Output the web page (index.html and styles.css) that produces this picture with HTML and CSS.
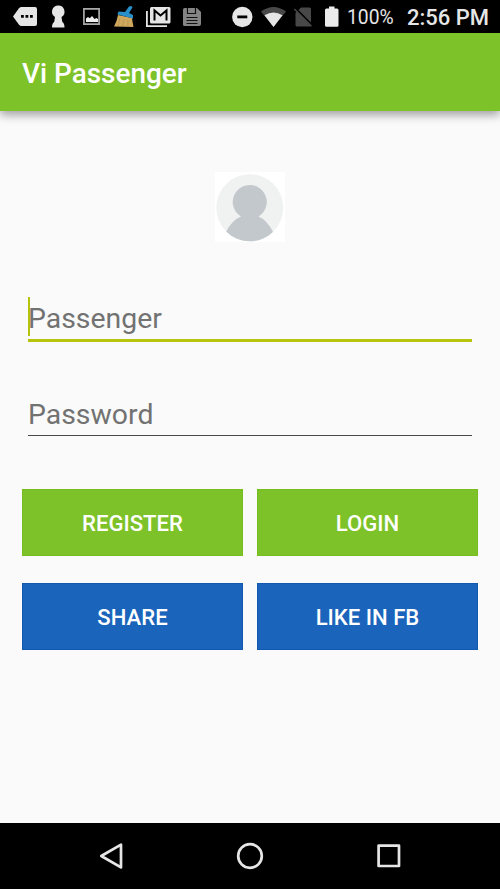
FILE: index.html
```html
<!DOCTYPE html>
<html lang="en">
<head>
<meta charset="utf-8">
<title>Vi Passenger</title>
<link rel="stylesheet" href="styles.css">
</head>
<body>
<div class="screen">
  <div class="status">
    <svg width="45" height="33" viewBox="0 0 45 33"><path fill="#e6e6e6" d="M13 16.500L19 8.200Q20 7 21.500 7H35Q37 7 37 9V24Q37 26 35 26H21.500Q20 26 19 24.800Z"/><path d="M21 15h2.800v2.800H21zM25.500 15h2.800v2.800h-2.800zM30 15h2.800v2.800H30z"/></svg>
    <svg width="30" height="33" viewBox="45 0 30 33"><path fill="#e6e6e6" d="M58.200 5.500A6.200 6.200 0 0 1 61.500 17L62.300 22Q64.500 23 64.500 27.500H52Q52 23 54.200 22L55 17A6.200 6.200 0 0 1 58.200 5.500Z"/></svg>
    <svg width="32" height="33" viewBox="75 0 32 33"><path fill="none" stroke="#aaa" stroke-width="1.700" d="M83.900 8.900h15.200v15.200H83.900z"/><path fill="#eee" d="M86 22v-3.500l2-1.500 1.800 1.200 2.200-2.200 2.500 3 2-1 1.500 1v3z"/></svg>
    <svg width="33" height="33" viewBox="107 0 33 33"><path fill="#cfa85e" d="M118 15L132 18Q132.500 22 133.500 27L114 26.500Q117 21 118 15Z"/><path stroke="#a98646" stroke-width=".5" d="M120 18l-2 8M124 19l-1.500 7M128 19.500l-.2 7"/><path fill="#2790c9" d="M118.500 11.500L125 12L129 6.500Q132 5 132.500 7.500L129 13L133 15V18.500L117.500 14.500Z"/></svg>
    <svg width="36" height="33" viewBox="140 0 36 33"><path fill="none" stroke="#e6e6e6" stroke-width="1.800" d="M146.900 11v15.200H167"/><path fill="#e6e6e6" d="M151.500 7h17.500q1.500 0 1.500 1.500v13.500q0 1.500-1.500 1.500h-17.500q-1.500 0-1.500-1.500v-13.500q0-1.500 1.500-1.500z"/><path fill="none" stroke="#000" stroke-width="2" d="M154.500 20.500V10.500L160.500 15.500L166.500 10.500V20.500"/></svg>
    <svg width="40" height="33" viewBox="176 0 40 33"><path fill="#858585" d="M184.500 8H197L201 12V24Q201 26 199 26H184.500Q183 26 183 24.500V9.500Q183 8 184.500 8Z"/><path stroke="#111" stroke-width="1.200" d="M187.500 8v5.500h8V8M186.500 17.500h11M186.500 20.500h11M186.500 23.500h11" fill="none"/><path fill="#858585" d="M188.200 8h4v5h-4z"/></svg>
    <svg width="41" height="33" viewBox="216 0 41 33"><circle cx="242.300" cy="17" r="10.200" fill="#e6e6e6"/><path d="M237.300 15.500h10v2.800h-10z"/></svg>
    <svg width="33" height="33" viewBox="257 0 33 33"><path fill="#484848" d="M273.500 27L261 11.500Q273.500 2.500 286 11.500Z"/><path fill="#e6e6e6" d="M273.500 27L264.500 15.300Q273.500 9.500 282.500 15.300Z"/></svg>
    <svg width="28" height="33" viewBox="290 0 28 33"><path fill="#484848" d="M301 7.500H309.500Q311 7.500 311 9V25Q311 26.500 309.500 26.500H297Q295.500 26.500 295.500 25V13Z"/><path stroke="#000" stroke-width="2" d="M295.500 8.500L313 26"/><path stroke="#484848" stroke-width="1.500" d="M294.300 9L311.500 26.300"/></svg>
    <svg width="29" height="33" viewBox="318 0 29 33"><path fill="#ebebeb" d="M329 6.500h5.500v2h2.500q1.500 0 1.500 1.500v15.500q0 1.300-1.500 1.300H326.500q-1.500 0-1.500-1.300V10q0-1.500 1.500-1.500h2.500z"/></svg>
    <span class="charge">100%</span><span class="clock">2:56 PM</span>
  </div>
  <header class="appbar">Vi Passenger</header>
  <main class="content">
    <svg class="avatar" viewBox="0 0 70 70"><path fill="#fff" d="M0 0h70v70H0z"/><clipPath id="disc"><circle cx="34.800" cy="35.800" r="33.500"/></clipPath><g clip-path="url(#disc)"><path fill="#f0f1f1" d="M0 0h70v70H0z"/><path fill="#c2c8cb" d="M26 44.500A17 17 0 1 1 43.500 44.500Q52 48 58 60V70H11V60Q17 48 26 44.500Z"/></g></svg>
    <div class="field focused"><span class="caret"></span>Passenger</div>
    <div class="field">Password</div>
    <div class="buttons">
      <div class="button green">REGISTER</div>
      <div class="button green">LOGIN</div>
      <div class="button blue">SHARE</div>
      <div class="button blue">LIKE IN FB</div>
    </div>
  </main>
  <nav class="navbar">
    <svg width="28" height="28" viewBox="0 0 28 28"><path d="M4.300 14L24 2.600V25.400Z"/></svg>
    <svg width="28" height="28" viewBox="0 0 28 28"><circle cx="14" cy="14" r="11.800"/></svg>
    <svg width="28" height="28" viewBox="0 0 28 28"><path d="M3.600 3.600h20.400v20.400H3.600z"/></svg>
  </nav>
</div>
</body>
</html>
```
FILE: styles.css
```css
body {
  margin: 0;
  font-family: Roboto, sans-serif;
}
.screen {
  width: 500px;
  height: 889px;
  display: flex;
  flex-direction: column;
  overflow: hidden;
  background: #fafafa;
}
.status {
  height: 33px;
  flex: none;
  display: flex;
  background: #000;
  color: #e6e6e6;
  line-height: 35px;
  white-space: nowrap;
}
.status svg {
  flex: none;
}
.charge {
  width: 60px;
  flex: none;
  font-size: 19.3px;
  line-height: 36px;
}
.clock {
  font-size: 22px;
  font-weight: 500;
}
.appbar {
  height: 78px;
  flex: none;
  box-sizing: border-box;
  padding-left: 22px;
  background: #7dc228;
  color: #fff;
  font-size: 27.9px;
  font-weight: 500;
  line-height: 82px;
  box-shadow: 0 4px 9px rgba(0, 0, 0, .36);
}
.content {
  flex: 1;
  display: flex;
  flex-direction: column;
  padding: 61px 22px 0;
}
.avatar {
  width: 70px;
  height: 70px;
  align-self: center;
  margin-bottom: 55px;
}
.field {
  position: relative;
  height: 42px;
  margin: 0 6px 51px;
  border-bottom: 1px solid #49494b;
  color: #727272;
  font-size: 28.4px;
  line-height: 44px;
}
.field.focused {
  border-bottom: 3px solid #b7c40c;
}
.caret {
  position: absolute;
  left: 0;
  top: 0;
  width: 2px;
  height: 39px;
  background: #b5c30b;
}
.buttons {
  display: grid;
  grid-template-columns: 221px 221px;
  grid-auto-rows: 67px;
  column-gap: 14px;
  row-gap: 27px;
  margin-top: 2px;
}
.button {
  box-sizing: border-box;
  color: #fff;
  font-size: 22.1px;
  font-weight: 500;
  line-height: 66px;
  text-align: center;
}
.green {
  background: #7dc228;
  border: 1px solid #76bd20;
}
.blue {
  background: #1b64bb;
  border: 1px solid #1058b2;
}
.navbar {
  height: 66px;
  flex: none;
  display: flex;
  align-items: center;
  justify-content: center;
  gap: 111px;
  background: #000;
}
.navbar svg {
  fill: none;
  stroke: #e6e6e6;
  stroke-width: 2.700;
  stroke-linejoin: round;
}
```
